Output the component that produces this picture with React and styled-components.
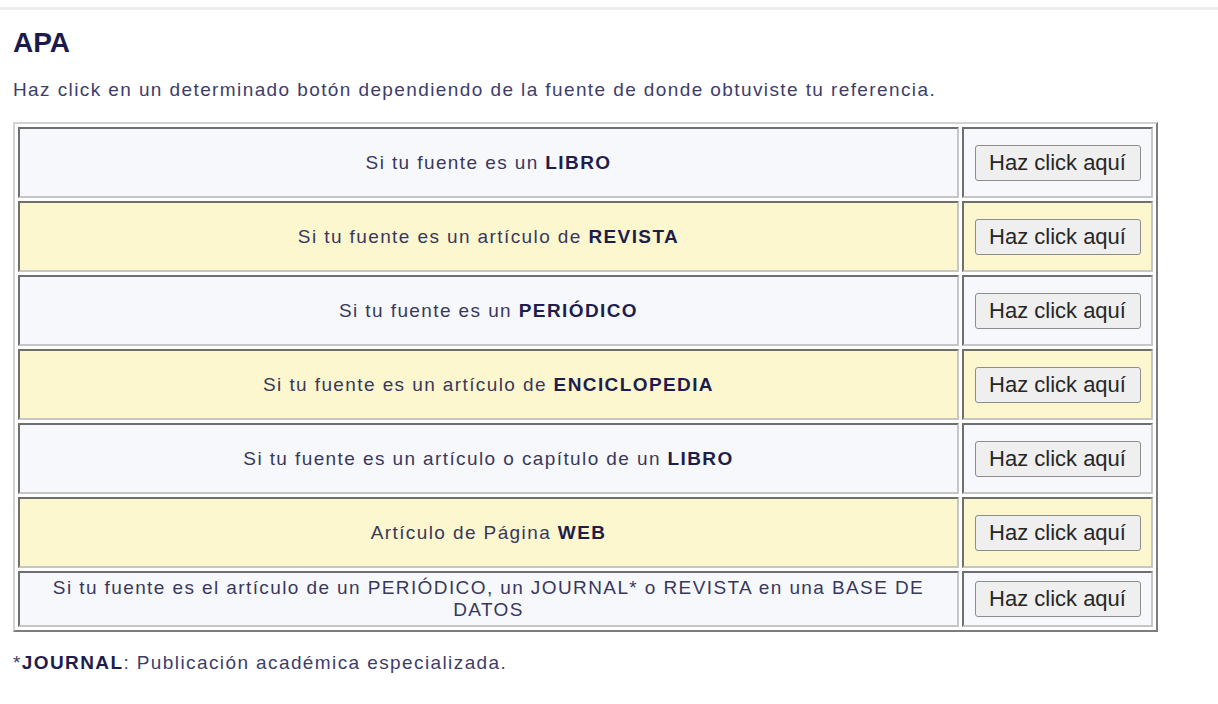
import React from "react";
import styled, { createGlobalStyle } from "styled-components";

const Global = createGlobalStyle`
  html, body { margin: 0; padding: 0; background: #ffffff; }
  body { font-family: "Liberation Sans", Arial, sans-serif; }
`;

const Page = styled.div`
  padding-top: 7px;
  width: 1218px;
  min-height: 704px;
  box-sizing: border-box;
`;

const TopRule = styled.div`
  height: 3px;
  background: #ececec;
`;

const Content = styled.div`
  padding: 0 13px;
`;

const Heading = styled.h1`
  margin: 17px 0 0;
  font-size: 28px;
  line-height: 32px;
  font-weight: bold;
  color: #1b1b4b;
`;

const Intro = styled.p`
  margin: 20px 0 0;
  font-size: 19px;
  line-height: 22px;
  letter-spacing: 1.4px;
  color: #3d3d6b;
`;

const Table = styled.table`
  margin-top: 21px;
  border-collapse: separate;
  border-spacing: 3px;
  border-width: 2px;
  border-style: solid;
  border-color: #d2d2d2 #7c7c7c #7c7c7c #d2d2d2;
  table-layout: fixed;
  width: 1145px;
`;

const Row = styled.tr`
  background: ${(p) => (p.$alt ? "#fdf7cf" : "#f7f8fc")};
`;

const Cell = styled.td`
  box-sizing: border-box;
  border-width: 2px;
  border-style: solid;
  border-color: #6f6f6f #c6c6c6 #c6c6c6 #6f6f6f;
  height: ${(p) => (p.$tall ? "71px" : "auto")};
  padding: 4px 20px;
  text-align: center;
  vertical-align: middle;
  font-size: 19px;
  line-height: 22px;
  letter-spacing: 1.4px;
  color: #38385c;
`;

const ActionCell = styled(Cell)`
  width: 191px;
  padding: 8px 4px;
  letter-spacing: 0;
`;

const Strong = styled.b`
  color: #1e1e4e;
`;

const Button = styled.button`
  font-family: "Liberation Sans", Arial, sans-serif;
  font-size: 22px;
  height: 36px;
  width: 166px;
  padding: 0;
  background: #efefef;
  color: #262626;
  border: 1px solid #8d8d8d;
  border-radius: 3px;
  cursor: pointer;
`;

const Note = styled.p`
  margin: 20px 0 0;
  font-size: 19px;
  line-height: 22px;
  letter-spacing: 1.4px;
  color: #3d3d6b;
`;

const rows = [
  { text: <>Si tu fuente es un <Strong>LIBRO</Strong></> },
  { text: <>Si tu fuente es un artículo de <Strong>REVISTA</Strong></>, alt: true },
  { text: <>Si tu fuente es un <Strong>PERIÓDICO</Strong></> },
  { text: <>Si tu fuente es un artículo de <Strong>ENCICLOPEDIA</Strong></>, alt: true },
  { text: <>Si tu fuente es un artículo o capítulo de un <Strong>LIBRO</Strong></> },
  { text: <>Artículo de Página <Strong>WEB</Strong></>, alt: true },
  {
    text: <>Si tu fuente es el artículo de un PERIÓDICO, un JOURNAL* o REVISTA en una BASE DE DATOS</>,
    short: true,
  },
];

export default function App() {
  return (
    <Page>
      <Global />
      <TopRule />
      <Content>
        <Heading>APA</Heading>
        <Intro>Haz click en un determinado botón dependiendo de la fuente de donde obtuviste tu referencia.</Intro>
        <Table>
          <tbody>
            {rows.map((r, i) => (
              <Row key={i} $alt={r.alt}>
                <Cell $tall={!r.short}>{r.text}</Cell>
                <ActionCell $tall={!r.short}>
                  <Button type="button">Haz click aquí</Button>
                </ActionCell>
              </Row>
            ))}
          </tbody>
        </Table>
        <Note>
          *<Strong>JOURNAL</Strong>: Publicación académica especializada.
        </Note>
      </Content>
    </Page>
  );
}
